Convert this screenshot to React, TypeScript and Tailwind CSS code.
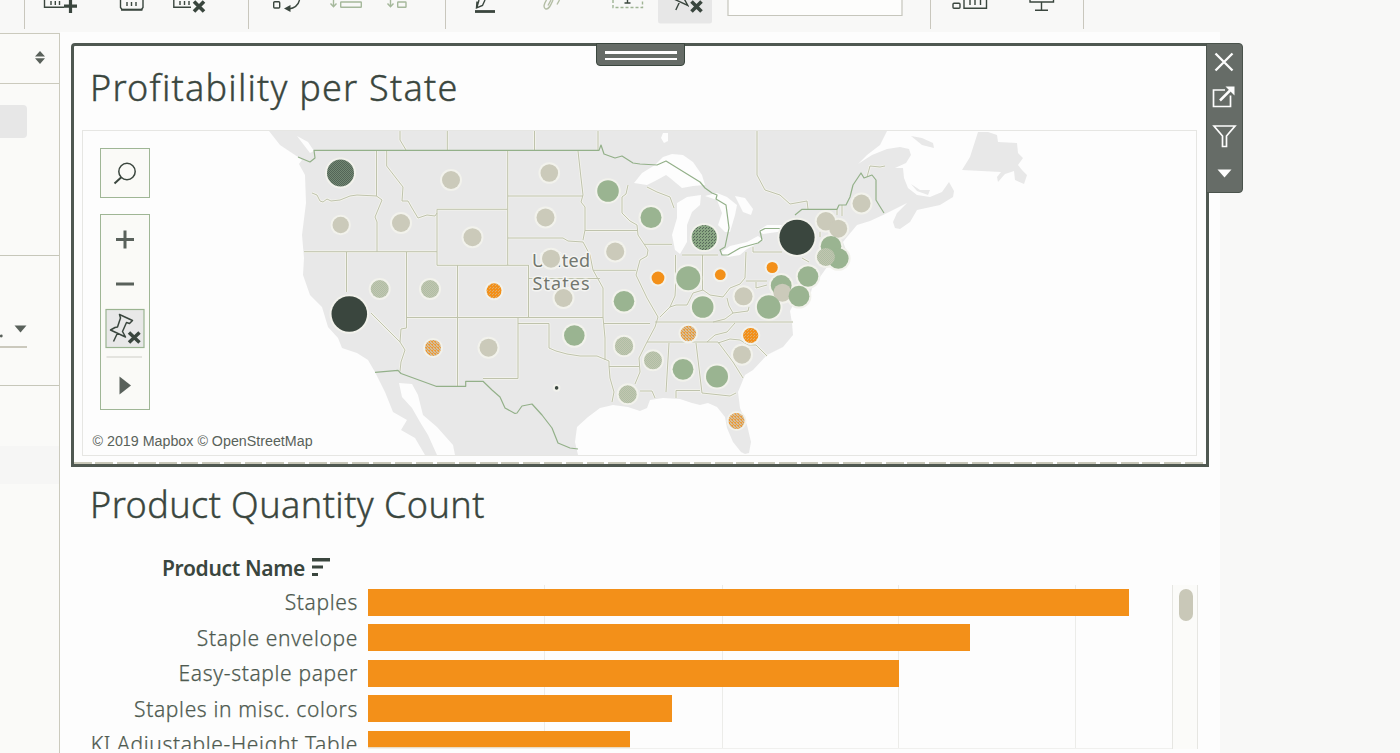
import React from "react";

const DARK = "#3a463e";
const GREEN = "#9ab491";
const BEIGE = "#cbcaba";
const ORANGE = "#f39019";

type Tone = "dark" | "green" | "beige" | "orange" | "darkGreen" | "beigeGreen" | "orangeBeige" | "orangeDots" | "greenDots";

const fills: Record<Tone, string> = {
  dark: DARK,
  green: GREEN,
  beige: BEIGE,
  orange: ORANGE,
  darkGreen: "url(#darkGreen)",
  beigeGreen: "url(#beigeGreen)",
  orangeBeige: "url(#orangeBeige)",
  orangeDots: "url(#orangeDots)",
  greenDots: "url(#greenDots)",
};

const marks: [number, number, number, Tone][] = [
  [340.5, 173, 13.5, "darkGreen"], [451, 180, 9, "beige"], [340.7, 225, 8.2, "beige"], [401, 223, 9, "beige"],
  [472.5, 237.2, 9, "beige"], [379.7, 289, 9, "beigeGreen"], [430, 289, 9, "beigeGreen"], [494, 290.7, 7.5, "orangeDots"],
  [349.3, 314, 17.8, "dark"], [433, 348, 8, "orangeBeige"], [488.5, 347.7, 9, "beige"], [549.3, 173, 8.8, "beige"],
  [545.5, 217.5, 9, "beige"], [551, 258.7, 9, "beige"], [563.5, 298, 9, "beige"], [574.3, 335.5, 10.3, "green"],
  [608, 191, 10.8, "green"], [651, 217.5, 10.5, "green"], [615.2, 251.5, 9, "beige"], [624, 301.3, 10.3, "green"],
  [624, 346, 9.2, "beigeGreen"], [704.3, 237.5, 12.6, "greenDots"], [658, 278, 6.4, "orange"], [688.3, 278.3, 12, "green"],
  [720.3, 274.7, 5.4, "orange"], [702.7, 307, 10.8, "green"], [688.3, 333.5, 7.8, "orangeBeige"], [653, 360.3, 9, "beigeGreen"],
  [683, 369.3, 10.4, "green"], [717, 376.5, 11, "green"], [627.7, 394.3, 9, "beigeGreen"], [736.5, 421, 8, "orangeBeige"],
  [750.7, 335.5, 7.6, "orangeDots"], [742, 354.7, 9, "beige"], [743.5, 296.3, 9, "beige"], [556.6, 387.9, 1.8, "dark"],
  [797, 237.3, 17.6, "dark"], [861.5, 203.5, 9, "beige"], [825.9, 221.3, 9.2, "beige"], [838.2, 228.7, 9, "beige"],
  [831, 246.3, 10.3, "green"], [838.3, 258.5, 10.3, "green"], [825.9, 257, 9, "beigeGreen"], [808, 276.5, 10.3, "green"],
  [772.2, 267.5, 5.6, "orange"], [781.2, 285.5, 10.4, "green"], [782.4, 292.7, 9, "beige"], [799, 296.2, 10.4, "green"],
  [768.7, 307, 11.8, "green"],
];

const land =
  "M269 131L280 145 298 157 302 160 299 164 305 175 306 203 302 235 304 258 303 275 310 295 322 307 328 327 338 338 342 348 357 353 368 360 375 372 385 392 393 412 407 420 401 430 415 438 425 455H437L428 435 420 422 412 408 402 397 399 383 412 384 418 395 423 415 437 427 453 445 455 455H578L575 442 577 427 588 417 600 408 613 405 628 407 640 411 647 408 650 400 663 398 680 399 692 403 700 405 708 403 717 407 725 417 727 428 733 442 741 452 745 454 749 453 751 442 747 425 740 408 738 392 745 375 753 370 767 355 783 347 793 335 792 323 790 311 793 305 808 305 812 288 820 277 827 267 840 268 849 258 843 242 847 237 857 225 870 221 883 215 907 203 897 213 893 222 895 228 900 229 910 222 917 210 940 205 953 197 954 191 949 182 942 192 930 197 917 195 908 188 904 178 903 168H895L906 163 911 155 909 149 900 147 887 149 872 155 858 164 867 155 880 145 887 131Z";

const islands = [
  "M978 132H988L997 135 998 142 1017 143 1018 153 1023 158 1018 165 1022 170 1027 175 1024 184 1015 180 1014 171 1005 174 998 182 997 177 1001 172 962 170 970 157Z",
  "M911 136L922 138 933 143 934 148 922 145Z",
  "M911 184L920 190 930 190 928 195 917 191Z",
];

const lakes = [
  "M634 183L642 173 655 165 663 157 672 154 683 155 693 162 702 175 705 185 693 186 682 188 670 178 666 175 657 180 647 185Z",
  "M677 203L687 197 701 195 700 205 692 212 687 225 687 242 680 254 675 250 672 235 677 218Z",
  "M705 196L717 193 727 197 737 205 735 215 730 232 725 232 718 225 722 213 717 200Z",
  "M735 196L745 198 753 209 751 215 743 212Z",
  "M720 253L730 246 747 242 758 236 764 240 747 249 740 255 728 257Z",
  "M758 231L767 225 784 225 784 231 763 234Z",
  "M663 133H668V141L664 143 661 138Z",
  "M297 136L308 142 314 151 310 153Z",
];

const stateLines =
  "M312 193L317 195 320 201 323 202 327 199 331 201 340 200 350 196 357 195 377 196M376.5 151V196L382 200 375 217 377 222V252M304 251.7H437M437 209.3H507.5M437 209.3V265.3H528.5M386.7 151V166L403 187 402 201 408 201 412 208 418 218 427 215 435 216 437 213M507.7 151V265M508 196H583M508 238H563L568 241 583 242 590 255 593 270 603 288V317L605 338V360M528.5 265V317M528.5 278.5H600M457.5 265V386M406.5 317.5H603M406.5 252V328L401 329 400 342 405 350 401 362 400 371M346.5 252V292M371 313L400 342M518 317V378.5H483M518 323.5H549V348L556 351 567 354 580 356 597 356 609 361V366L610 378 614 392 612 402M609 366.5H639M604 323.5H650M578 151L581 178 583 195 581 202 585 207V230L583 240M585 230.5H638M593 270.3H636M628 185L626 194 622 197 622 213 630 221 637 225 638 235 648 250 647 256 640 260 636 275 647 298 658 317 655 327 647 342 639 358 640 372 635 384M644 244.3H672M647 187L657 192 670 197 674 208M675.5 255V288L675 296 670 307 660 317M702.5 255V290M682 255H718M670 307L676 305 687 305 693 293 703 290 710 295 723 297 730 288 740 284 745 278 746 252M727 298L729 306 733 313 725 319 713 322M733 313L748 311 749 307M655 322H793M647 342H718L733 362 743 378M669 343L666 392M696 343L702 393 730 396 736 393M676 398V390.5H700M718 343L730 339 740 340 748 345 756 345 767 356M707 342L715 335 727 332 735 323M746 281H767M753 247V252H782M756 282V288L767 285M837 209V215M842 205V216M640 391H652L655 398M820 232V237M802 258L809 262M400 131V140L406 150M447.3 131V150M534.5 131V150M598 131V150M757 131V175L765 190 780 195 790 204 807 201 808 209M867 177L870 166 880 167 885 166";

const nationalLines =
  "M298 157L310 162 315 158 314 150.4H599L601 145 604 154 615 158 622 156 633 163 640 164 657 165 666 161 700 182 705 188 712 193 717 195 716 199 726 205 729 228 725 247 720 250 722 255 728 255 740 248 758 243 762 240 760 231 765 228.5H782M795 215L802 209.3H837L839 205 846 205 850 197 853 185 861 173 864 178 872 175 876 180V200L879 205 884 213M375 372.3L398 370.3 401 373.5 436 386.3H465.7V381.3H483L492 390 500 397 505 408 515 413.5 517 413 522 406 532 404 542 415 552 428 558 443 570 448 578 449";

const pinPath =
  "M14.5 100.5L27.5 106.5 24.5 109.500 21.500 108.500 17.500 117.500 20.500 123 5.500 116 10 113.500 12.500 113 15.500 104zM12.500 119L8.500 127.500";

function ProfitMap() {
  return (
    <svg className="block h-full w-full" viewBox="83 131 1113 324">
      <defs>
        <pattern id="darkGreen" width="2" height="2" patternUnits="userSpaceOnUse">
          <rect width="2" height="2" fill="#728873" />
          <path d="M0 0h1v1H0zM1 1h1v1H1z" fill="#536457" />
        </pattern>
        <pattern id="beigeGreen" width="2" height="2" patternUnits="userSpaceOnUse">
          <rect width="2" height="2" fill="#c2c5b1" />
          <path d="M0 0h1v1H0zM1 1h1v1H1z" fill="#afbfa4" />
        </pattern>
        <pattern id="orangeBeige" width="3" height="3" patternUnits="userSpaceOnUse">
          <rect width="3" height="3" fill="#d2bd9b" />
          <path d="M0 0h1v1H0zM1 1h1v1H1zM2 2h1v1H2zM0 2h1v1H0z" fill="#ec9a38" />
        </pattern>
        <pattern id="orangeDots" width="3" height="3" patternUnits="userSpaceOnUse">
          <rect width="3" height="3" fill={ORANGE} />
          <path d="M0 0h1v1H0zM1 2h1v1H1z" fill="#dfae6c" />
        </pattern>
        <pattern id="greenDots" width="3" height="3" patternUnits="userSpaceOnUse">
          <rect width="3" height="3" fill="#89a683" />
          <path d="M0 0h1v1H0zM1 2h1v1H1z" fill="#586a5b" />
        </pattern>
      </defs>
      <path d={land} fill="#e8e8e8" />
      {islands.map((d) => <path key={d} d={d} fill="#e8e8e8" />)}
      {lakes.map((d) => <path key={d} d={d} fill="#fdfdfd" />)}
      <g fill="none" strokeLinejoin="round">
        <path d={stateLines} stroke="#f3f3ed" strokeWidth="2.6" />
        <path d={stateLines} stroke="#bfc3ac" strokeWidth="1" />
        <path d={nationalLines} stroke="#93b089" strokeWidth="1.2" />
      </g>
      <g fill="#72776f" stroke="#f4f4f2" strokeWidth="3" strokeLinejoin="round" paintOrder="stroke" fontFamily="Noto Sans, Open Sans, sans-serif" fontSize="18">
        <text x="532" y="266.500" textLength="58">United</text>
        <text x="532.500" y="289.500" textLength="57">States</text>
      </g>
      {marks.map(([x, y, r]) => <circle key={`h${x}-${y}`} cx={x} cy={y} r={r + 2} fill="#f2f2ec" />)}
      {marks.map(([x, y, r, tone]) => <circle key={`${x}-${y}`} cx={x} cy={y} r={r} fill={fills[tone]} />)}
    </svg>
  );
}

function ToolbarGroup({ x, w, children }: { x: number; w: number; children?: React.ReactNode }) {
  return (
    <div className="h-[29px] shrink-0 border-r border-[#c9c7bd]" style={{ width: w }}>
      <svg className="block" width={w - 1} height="29" viewBox={`${x} 0 ${w - 1} 29`} fill="none" stroke={DARK} strokeWidth="1.4">
        {children}
      </svg>
    </div>
  );
}

function Toolbar() {
  return (
    <header className="flex h-8 shrink-0 items-start">
      <ToolbarGroup x={0} w={25} />
      <ToolbarGroup x={25} w={224}>
        <path d="M44.5 0V7.3H64M51 1v4M55.3 1v4M59.5 1v4" />
        <path d="M70.5 0v13M64 6.2h13" strokeWidth="3.2" />
        <path d="M120.500 0V7.500L122 9.500H141.500L143 7.500V0M127 2v4M131.500 2v4M136 2v4" />
        <path d="M121 9.800H142.500" strokeWidth="1.8" />
        <path d="M173.800 0V7.300H191M180 1v4M184.500 1v4M189 1v4" />
        <path d="M194 1.500l10 10M204 1.500l-10 10" strokeWidth="3.6" />
      </ToolbarGroup>
      <ToolbarGroup x={249} w={197}>
        <rect x="273.700" y="1.700" width="6" height="6.300" rx="1" />
        <path d="M299.500 0C298.500 4.500 295 8 288.500 9" />
        <path d="M284 8.600l6.500-3.700v7z" fill={DARK} stroke="none" />
        <g stroke="#a5b89b">
          <path d="M333.500 0v6.500M330.500 3.500l3 3.300 3-3.300M390.500 0v6.500M387.500 3.500l3 3.300 3-3.300" />
          <rect x="340.700" y="2" width="20.600" height="5.300" rx="0.500" />
          <rect x="397.700" y="2" width="8.300" height="5.300" rx="0.500" />
        </g>
      </ToolbarGroup>
      <ToolbarGroup x={446} w={485}>
        <path d="M477 1.500l-.5 6.500 6-2.500 2.500-5.500M479 0l-2 7" />
        <path d="M475 11.500H495" strokeWidth="2.800" />
        <path d="M546.500 0C544 4 543 7.500 545.500 8.800 549 10 551 4.500 553 0M551 0l-3 5.500M559.500 0l-2.500 4.500" stroke="#b4bea5" />
        <path d="M613 0V7.500H642.500V0" stroke="#9fb494" strokeDasharray="3 2" />
        <path d="M627.500 0v3M624.500 3h6" />
        <path d="M658 0h54v21q0 2.500-2.500 2.500h-49q-2.500 0-2.500-2.500z" fill="#e7e7e7" stroke="none" />
        <path d={pinPath} transform="translate(667.300 -117.500)" />
        <path d="M691.500 1.500l10 10M701.500 1.500l-10 10" stroke="#e7e7e7" strokeWidth="6" />
        <path d="M691.500 1.500l10 10M701.500 1.500l-10 10" strokeWidth="3.600" />
        <path d="M728 0V15.500H902V0" fill="#fdfdfc" stroke="#c6c6bc" strokeWidth="1.200" />
      </ToolbarGroup>
      <ToolbarGroup x={931} w={153}>
        <rect x="953" y="3.300" width="7" height="5" rx="1" />
        <path d="M964 0V8.200H986.500V0M970 0v5M975 0v5M980.500 0v5" />
        <path d="M1030 0V2H1053.500V0M1041.500 2v8M1035 10.200h13" />
      </ToolbarGroup>
    </header>
  );
}

function SidePanel() {
  return (
    <aside className="mt-px flex w-[60px] shrink-0 flex-col border-r border-t border-[#cbcabd] bg-[#fafaf8]">
      <div className="flex h-[50px] items-center justify-end border-b border-[#cbcabd] pb-[3px] pr-[14px]">
        <svg width="10" height="13" viewBox="0 0 10 13" fill="#59615b"><path d="M0 5.500L5 0l5 5.500zM0 7.300h10L5 13z" /></svg>
      </div>
      <div className="h-[172px] border-b border-[#c6c7ba] pt-[21px]">
        <div className="h-[33px] w-[27px] rounded-r-sm bg-[#e7e7e7]" />
      </div>
      <div className="h-[130px] border-b border-[#c6c7ba] pt-[61px]">
        <div className="flex h-[31px] w-[27px] items-center border-b-2 border-[#cbc9bd] pb-[3px]">
          <svg width="27" height="20" viewBox="0 0 27 20" fill="#59615b"><circle cx="1.300" cy="16" r="1.400" /><path d="M14.500 5.500h12l-6 7z" /></svg>
        </div>
      </div>
      <div className="mt-[60px] h-[38px] bg-[#f6f6f5]" />
    </aside>
  );
}

function MapControls() {
  return (
    <div className="absolute left-[17px] top-[17px] flex w-[50px] flex-col gap-4">
      <button className="flex h-[50px] items-center justify-center border-[1.500px] border-[#9fb695] bg-[#fafaf7] pt-px">
        <svg width="26" height="26" viewBox="0 0 26 26" fill="none" stroke={DARK}><circle cx="15" cy="10.500" r="8.200" strokeWidth="1.500" /><path d="M9.300 16.300L2.500 22.500" strokeWidth="2" /></svg>
      </button>
      <div className="flex h-[196px] justify-center border-[1.500px] border-[#9fb695] bg-[#fafaf7]">
        <svg className="-mt-px" width="40" height="196" viewBox="0 0 40 196" fill="none" stroke={DARK}>
          <path d="M11 25.500H29M20 16.500v18" strokeWidth="3" stroke="#59615b" />
          <path d="M11 70H29" strokeWidth="3" stroke="#59615b" />
          <rect x="1" y="95.500" width="38" height="38" fill="#e8e8e8" stroke={GREEN} strokeWidth="1.200" />
          <path d={pinPath} strokeWidth="1.500" strokeLinejoin="round" />
          <path d="M24 118.500l10.500 10M34.500 118.500L24 128.500" strokeWidth="3.500" />
          <path d="M1.500 143H37" stroke="#e4e4df" strokeWidth="2" />
          <path d="M14.500 162.500L26 171.500 14.500 180.500z" fill="#59615b" stroke="none" />
        </svg>
      </div>
    </div>
  );
}

function MapCard() {
  return (
    <section className="relative ml-[11px] flex h-[424px] w-[1138px] flex-col rounded-tl-sm border-[3px] border-[#4f5851] bg-[#fdfdfd] px-[8px]">
      <div className="absolute -top-[3px] left-[522px] flex h-[23px] w-[89px] flex-col items-center gap-[4px] rounded-b-[4px] border border-[#3a463e] bg-[#666c67] pt-[7px]">
        <div className="h-[2.500px] w-[72px] bg-white" />
        <div className="h-[2.500px] w-[72px] bg-white" />
      </div>
      <div className="absolute -top-[3px] left-[1132px] h-[150px] w-[37px] rounded-r-[4px] border border-[#4a534c] bg-[#666c67]">
        <svg width="35" height="148" viewBox="1207 44 35 148" fill="none" stroke="#fdfdfd" strokeWidth="2">
          <path d="M1215.500 53.500l17 17M1232.500 53.500l-17 17" strokeWidth="2.300" />
          <path d="M1225 90h-11.500v16.500h17V95.500" strokeWidth="1.700" />
          <path d="M1220 100.500L1230 90.500" strokeWidth="2.500" />
          <path d="M1225.500 86.500h9v9z" fill="#fdfdfd" stroke="none" />
          <path d="M1214 126H1235L1226.500 136V146.500H1222.500V136z" strokeWidth="1.700" />
          <path d="M1217.500 169.500h14l-7 8z" fill="#fdfdfd" stroke="none" />
        </svg>
      </div>
      <h2 className="h-[84px] whitespace-nowrap pl-[8px] pt-[17px] font-['Noto_Sans'] text-[36px] font-light leading-[50px] tracking-[1.220px] text-[#3a463e] [-webkit-text-stroke:0.400px_#3a463e]">Profitability per State</h2>
      <div className="relative h-[326px] w-[1115px] border border-[#e6e6e3]">
        <ProfitMap />
        <MapControls />
        <p className="absolute bottom-[5px] left-[9.500px] whitespace-nowrap font-['Liberation_Sans'] text-[14.270px] leading-[18px] text-[#59625a]">© 2019 Mapbox © OpenStreetMap</p>
      </div>
      <div className="-mx-[8px] mt-auto h-[2px] bg-[repeating-linear-gradient(90deg,#c9c8b9_0px,#c9c8b9_17.500px,#fdfdfd_17.500px,#fdfdfd_21.370px)]" />
    </section>
  );
}

const products = [
  { name: "Staples", value: 761 },
  { name: "Staple envelope", value: 602 },
  { name: "Easy-staple paper", value: 531 },
  { name: "Staples in misc. colors", value: 304 },
  { name: "KI Adjustable-Height Table", value: 262 },
];

function QuantityChart() {
  return (
    <section className="flex flex-col">
      <h2 className="h-[85px] whitespace-nowrap pl-[30px] pt-[13px] font-['Noto_Sans'] text-[36px] font-light leading-[50px] tracking-[0.430px] text-[#3a463e] [-webkit-text-stroke:0.400px_#3a463e]">Product Quantity Count</h2>
      <div className="flex h-[33px] items-start pl-[102px] font-['Noto_Sans'] text-[21px] font-semibold tracking-[-0.330px] text-[#3a463e]">
        <span className="w-[150px] whitespace-nowrap leading-[32px]">Product Name</span>
        <svg className="mt-[6px]" width="19" height="19" viewBox="0 0 19 19" fill={DARK}><path d="M0 0h18v3.500H0zM0 7.500h11v3H0zM0 15h6v3H0z" /></svg>
      </div>
      <div className="flex h-[164px]">
        <div className="flex h-[164px] w-[298px] flex-col overflow-hidden">
          {products.map((p) => (
            <div key={p.name} className="h-[35.600px] shrink-0 whitespace-nowrap text-right font-['Noto_Sans'] text-[21px] font-light leading-[35.600px] tracking-[0.650px] text-[#4e5a50] [-webkit-text-stroke:0.250px_#4e5a50]">{p.name}</div>
          ))}
        </div>
        <div className="ml-[10px] flex h-[164px] w-[804px] flex-col overflow-hidden border-b border-[#f0f0ee] bg-[linear-gradient(90deg,transparent_176px,#ecece9_176px,#ecece9_177px,transparent_177px,transparent_354px,#ecece9_354px,#ecece9_355px,transparent_355px,transparent_530px,#ecece9_530px,#ecece9_531px,transparent_531px,transparent_707px,#ecece9_707px,#ecece9_708px,transparent_708px)] pt-[3.500px]">
          {products.map((p, i) => (
            <div key={p.name} className="h-[35.600px] shrink-0">
              <div className={i === 4 ? "h-[27px] bg-[linear-gradient(#f39019_16px,#eadcc4_16px,#eadcc4_17px,#f39019_17px)]" : "h-[27px] bg-[#f39019]"} style={{ width: p.value }} />
            </div>
          ))}
        </div>
        <div className="flex h-[164px] w-[26px] justify-center border-x border-[#e6e6e2] bg-[#fbfbf9] pl-[2px] pt-[4px]">
          <div className="h-[32px] w-[14px] rounded-full bg-[#c9c8b8]" />
        </div>
      </div>
    </section>
  );
}

export default function App() {
  return (
    <div className="flex h-[753px] w-[1400px] flex-col overflow-hidden bg-[#f8f8f7]">
      <Toolbar />
      <div className="flex min-h-0 flex-1">
        <SidePanel />
        <main className="flex w-[1160px] shrink-0 flex-col bg-[#fdfdfd] pt-[11px]">
          <MapCard />
          <QuantityChart />
        </main>
      </div>
    </div>
  );
}
